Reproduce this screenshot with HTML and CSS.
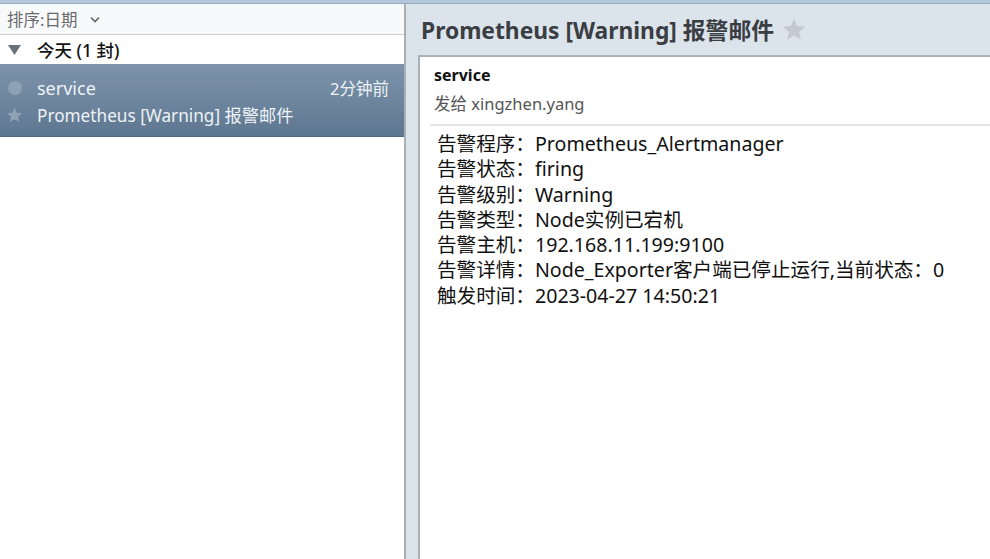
FILE: index.html
```html
<!DOCTYPE html>
<html lang="zh-CN">
<head>
    <meta charset="UTF-8">
    <title>Prometheus [Warning] 报警邮件</title>
    <link rel="stylesheet" href="styles.css">
</head>
<body>
    <div class="topbar"></div>
    <div class="app">
        <div class="list">
            <div class="sort-bar">
                <span>排序:日期</span>
                <svg class="chevron" width="10" height="7" viewBox="0 0 10 7"><path d="M1 1.5 L5 5.5 L9 1.5" fill="none" stroke="#666" stroke-width="1.6"/></svg>
            </div>
            <div class="group-row">
                <svg class="caret" width="13" height="10" viewBox="0 0 13 10"><path d="M0 0 H13 L6.5 10 Z" fill="#6b7178"/></svg>
                <span>今天 (1 封)</span>
            </div>
            <div class="mail-item selected">
                <div class="item-line">
                    <span class="dot"></span>
                    <span class="sender">service</span>
                    <span class="time">2分钟前</span>
                </div>
                <div class="item-line">
                    <svg class="star-sm" width="17" height="16" viewBox="0 0 24 23"><path d="M12 0.8 L15.1 8.1 L23 8.7 L17 13.9 L18.9 21.6 L12 17.5 L5.1 21.6 L7 13.9 L1 8.7 L8.9 8.1 Z" fill="#8fa2b6"/></svg>
                    <span class="subject">Prometheus [Warning] 报警邮件</span>
                </div>
            </div>
        </div>
        <div class="reader">
            <div class="reader-head">
                <h1>Prometheus [Warning] 报警邮件</h1>
                <svg class="star" width="24" height="23" viewBox="0 0 24 23"><path d="M12 0.8 L15.1 8.1 L23 8.7 L17 13.9 L18.9 21.6 L12 17.5 L5.1 21.6 L7 13.9 L1 8.7 L8.9 8.1 Z" fill="#c3c9d0"/></svg>
            </div>
            <div class="mail-card">
                <div class="mail-meta">
                    <div class="from">service</div>
                    <div class="to">发给 xingzhen.yang</div>
                </div>
                <div class="mail-body">
                    <div>告警程序：Prometheus_Alertmanager</div>
                    <div>告警状态：firing</div>
                    <div>告警级别：Warning</div>
                    <div>告警类型：Node实例已宕机</div>
                    <div>告警主机：192.168.11.199:9100</div>
                    <div>告警详情：Node_Exporter客户端已停止运行,当前状态：0</div>
                    <div>触发时间：2023-04-27 14:50:21</div>
                </div>
            </div>
        </div>
    </div>
</body>
</html>
```

FILE: styles.css
```css
html, body {
    margin: 0;
    height: 100%;
}
body {
    font-family: "Noto Sans", "Noto Sans CJK SC", sans-serif;
    display: flex;
    flex-direction: column;
    background: #ffffff;
    overflow: hidden;
}
.topbar {
    height: 3px;
    background: #b4c6d9;
    border-bottom: 1px solid #98abbf;
}
.app {
    flex: 1;
    display: flex;
    min-height: 0;
}
.list {
    width: 404px;
    border-right: 2px solid #a7afb7;
    background: #ffffff;
}
.sort-bar {
    height: 30px;
    display: flex;
    align-items: center;
    padding-left: 7px;
    background: #f8f9fa;
    border-bottom: 1px solid #c9cdd2;
    color: #6a6a6a;
    font-size: 16.5px;
}
.chevron {
    margin-left: 13px;
    margin-top: 1px;
}
.group-row {
    height: 29px;
    display: flex;
    align-items: center;
    padding-left: 8px;
    font-size: 17.5px;
    font-weight: 500;
    color: #111;
}
.caret {
    margin-right: 16px;
}
.mail-item {
    height: 73px;
    padding-top: 10px;
    box-sizing: border-box;
}
.mail-item.selected {
    background: linear-gradient(#7d94ab, #5e7790);
    border-bottom: 1px solid #4f6880;
    color: #eef2f6;
}
.item-line {
    height: 27px;
    display: flex;
    align-items: center;
    padding-left: 6px;
    padding-right: 15px;
}
.dot {
    width: 14px;
    height: 14px;
    border-radius: 50%;
    background: #8ea2b6;
    margin: 0 15px 0 2px;
}
.star-sm {
    margin-right: 14px;
}
.sender {
    flex: 1;
    font-size: 18px;
}
.time {
    font-size: 16.5px;
}
.subject {
    font-size: 17.2px;
}
.reader {
    flex: 1;
    background: #dbe3eb;
    display: flex;
    flex-direction: column;
}
.reader-head {
    height: 51px;
    display: flex;
    align-items: center;
    padding-left: 15px;
}
.reader-head h1 {
    margin: 0;
    font-size: 22.8px;
    font-weight: bold;
    color: #3a3d42;
}
.star {
    margin-left: 8px;
}
.mail-card {
    flex: 1;
    margin-left: 12px;
    background: #ffffff;
    border-left: 2px solid #a9b1b9;
    border-top: 2px solid #a9b1b9;
}
.mail-meta {
    margin-left: 10px;
    padding: 6px 0 4px 4px;
    border-bottom: 2px solid #e4e6e8;
}
.from {
    font-size: 16px;
    font-weight: bold;
    color: #111;
    line-height: 24px;
}
.to {
    font-size: 16.5px;
    color: #555;
    line-height: 33px;
}
.mail-body {
    padding: 5px 0 0 17px;
    font-size: 19.6px;
    line-height: 25.3px;
    color: #111;
}
```
